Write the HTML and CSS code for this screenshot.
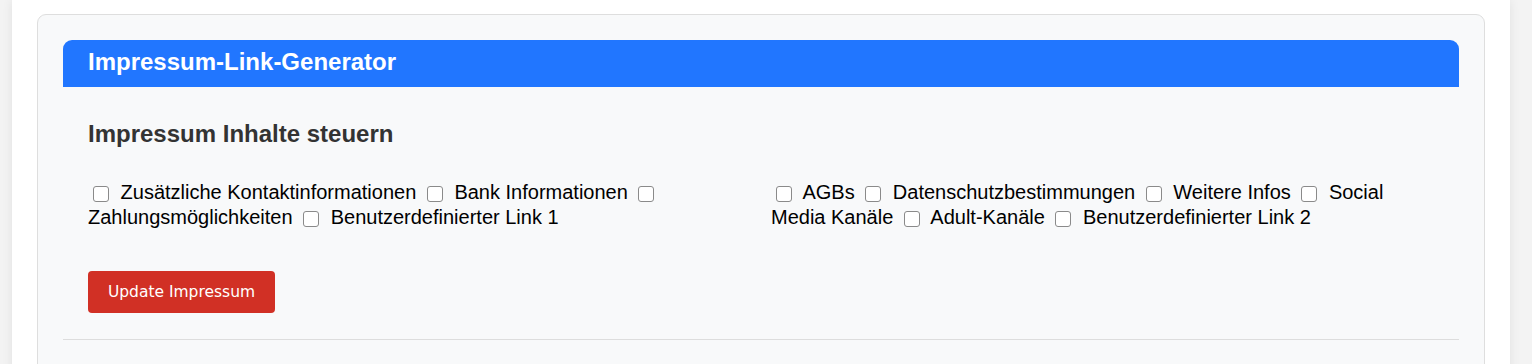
FILE: index.html
```html
<!DOCTYPE html>
<html lang="de">
<head>
    <meta charset="UTF-8">
    <meta name="viewport" content="width=device-width, initial-scale=1.0">
    <title>Impressum-Link-Generator</title>
    <link rel="stylesheet" href="styles.css">
</head>
<body>
    <div class="wrapper">
        <div class="card">
            <div class="card-header">Impressum-Link-Generator</div>
            <div class="card-body">
                <h2>Impressum Inhalte steuern</h2>

                <div class="options">
                    <div class="option-col">
                        <label><input type="checkbox"> Zusätzliche Kontaktinformationen</label>
                        <label><input type="checkbox"> Bank Informationen</label>
                        <label><input type="checkbox"> Zahlungsmöglichkeiten</label>
                        <label><input type="checkbox"> Benutzerdefinierter Link 1</label>
                    </div>
                    <div class="option-col">
                        <label><input type="checkbox"> AGBs</label>
                        <label><input type="checkbox"> Datenschutzbestimmungen</label>
                        <label><input type="checkbox"> Weitere Infos</label>
                        <label><input type="checkbox"> Social Media Kanäle</label>
                        <label><input type="checkbox"> Adult-Kanäle</label>
                        <label><input type="checkbox"> Benutzerdefinierter Link 2</label>
                    </div>
                </div>

                <button class="update-btn">Update Impressum</button>
            </div>
            <hr class="divider">
        </div>
    </div>
</body>
</html>
```

FILE: styles.css
```css
html, body {
    height: 100%;
}
body {
    margin: 0;
    background-color: #f3f3f3;
    font-family: "Liberation Sans", Arial, sans-serif;
    color: #000;
}
.wrapper {
    background-color: #fff;
    margin: 0 22px 0 12px;
    padding: 14px 25px 0 25px;
    min-height: 100%;
    box-sizing: border-box;
    box-shadow: 0 0 10px rgba(0, 0, 0, 0.08);
}
.card {
    background-color: #f8f9fa;
    border: 1px solid #dedede;
    border-radius: 9px;
    padding: 25px 25px 40px 25px;
}
.card-header {
    background-color: #2176ff;
    color: #fff;
    font-size: 24px;
    font-weight: bold;
    height: 47px;
    line-height: 43px;
    padding: 0 25px;
    border-radius: 9px 9px 0 0;
}
.card-body {
    padding: 0 25px;
}
h2 {
    font-size: 24px;
    font-weight: bold;
    color: #333;
    margin: 33px 0 0 0;
    line-height: 28px;
}
.options {
    display: grid;
    grid-template-columns: 1fr 1fr;
    column-gap: 20px;
    margin-top: 32px;
    font-size: 20px;
    line-height: 25px;
}
.option-col label {
    display: inline;
}
.option-col input {
    -webkit-appearance: none;
    appearance: none;
    box-sizing: border-box;
    width: 16px;
    height: 16px;
    margin: 0 6px 0 5px;
    vertical-align: -3px;
    background-color: #fff;
    border: 1px solid #8a8a8a;
    border-radius: 3px;
}
.update-btn {
    display: block;
    margin-top: 41px;
    background-color: #d13025;
    color: #fff;
    border: none;
    border-radius: 4px;
    width: 187px;
    height: 42px;
    font-family: "DejaVu Sans", Tahoma, sans-serif;
    font-size: 15.5px;
    cursor: pointer;
}
.divider {
    border: none;
    border-top: 1px solid #dddddd;
    margin: 26px 0 0 0;
}
```
